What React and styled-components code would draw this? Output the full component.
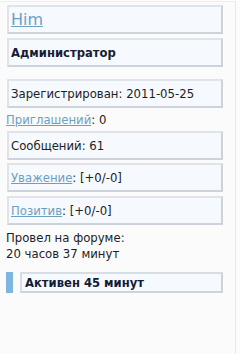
import React from 'react';
import styled, { createGlobalStyle } from 'styled-components';

const GlobalStyle = createGlobalStyle`
  body {
    margin: 0;
    padding: 0;
    background: #fcfcfc;
    font-family: 'DejaVu Sans', Verdana, sans-serif;
    font-size: 11.7px;
    color: #1c1e28;
  }
`;

const Panel = styled.div`
  width: 235px;
  height: 352px;
  margin-top: 1px;
  border-top: 1px solid #eceef0;
  border-right: 1px solid #e6e8eb;
  background: #fbfbfc;
  display: flex;
  flex-direction: column;
`;

const Box = styled.div`
  box-sizing: border-box;
  width: 216px;
  height: 29px;
  margin-left: 7px;
  margin-top: ${(p) => p.mt || 0}px;
  padding-left: 2px;
  background: #f6f9fd;
  border: 2px solid;
  border-color: #dfe4ea #cdd3db #cdd3db #dfe4ea;
  display: flex;
  align-items: center;
  font-weight: ${(p) => (p.bold ? 700 : 400)};
  font-size: ${(p) => (p.bold ? '11.6px' : 'inherit')};
  color: ${(p) => (p.bold ? '#161d33' : '#1c1e28')};
`;

const Line = styled.div`
  padding-left: 6px;
  height: 16px;
  line-height: 16px;
  margin-top: ${(p) => p.mt || 0}px;
`;

const Link = styled.a`
  color: #6d9fc3;
  text-decoration: underline;
  font-size: ${(p) => (p.size ? `${p.size}px` : 'inherit')};
  cursor: pointer;
`;

const ActiveRow = styled.div`
  display: flex;
  align-items: stretch;
  gap: 7px;
  margin-left: 6px;
  margin-top: ${(p) => p.mt || 0}px;
  height: 21px;
`;

const Marker = styled.div`
  width: 7px;
  background: #7eb6e2;
`;

const ActiveBox = styled.div`
  box-sizing: border-box;
  width: 203px;
  padding-left: 3px;
  background: #f6f9fd;
  border: 2px solid;
  border-color: #d7dde4 #cdd3db #cdd3db #d7dde4;
  display: flex;
  align-items: center;
  font-size: 11.6px;
  font-weight: 700;
  color: #141c36;
`;

export default function App() {
  return (
    <>
      <GlobalStyle />
      <Panel>
        <Box mt={3}>
          <Link size={16}>Him</Link>
        </Box>
        <Box mt={4} bold>Администратор</Box>
        <Box mt={12}>Зарегистрирован: 2011-05-25</Box>
        <Line mt={4}>
          <Link>Приглашений</Link>: 0
        </Line>
        <Box mt={3}>Сообщений: 61</Box>
        <Box mt={3}>
          <Link>Уважение</Link>: [+0/-0]
        </Box>
        <Box mt={4}>
          <Link>Позитив</Link>: [+0/-0]
        </Box>
        <Line mt={5}>Провел на форуме:</Line>
        <Line>20 часов 37 минут</Line>
        <ActiveRow mt={10}>
          <Marker />
          <ActiveBox>Активен 45 минут</ActiveBox>
        </ActiveRow>
      </Panel>
    </>
  );
}
